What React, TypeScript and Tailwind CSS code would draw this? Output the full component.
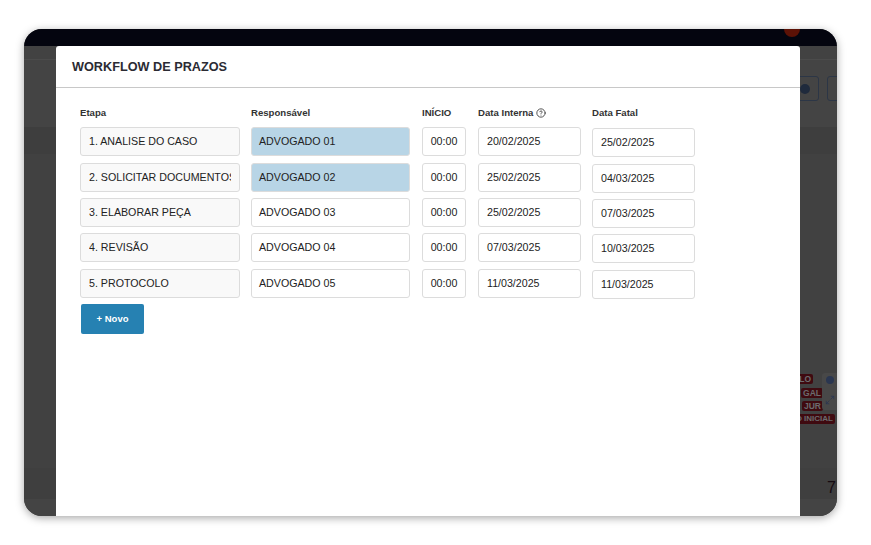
import { CircleHelp, Maximize2 } from 'lucide-react';

const rows = [
    { etapa: '1. ANALISE DO CASO', resp: 'ADVOGADO 01', hi: true, inicio: '00:00', interna: '20/02/2025', fatal: '25/02/2025', gap: 'mb-[7px]' },
    { etapa: '2. SOLICITAR DOCUMENTOS', resp: 'ADVOGADO 02', hi: true, inicio: '00:00', interna: '25/02/2025', fatal: '04/03/2025', gap: 'mb-[6px]' },
    { etapa: '3. ELABORAR PEÇA', resp: 'ADVOGADO 03', hi: false, inicio: '00:00', interna: '25/02/2025', fatal: '07/03/2025', gap: 'mb-[6px]' },
    { etapa: '4. REVISÃO', resp: 'ADVOGADO 04', hi: false, inicio: '00:00', interna: '07/03/2025', fatal: '10/03/2025', gap: 'mb-[7px]' },
    { etapa: '5. PROTOCOLO', resp: 'ADVOGADO 05', hi: false, inicio: '00:00', interna: '11/03/2025', fatal: '11/03/2025', gap: 'mb-[6px]' },
];

const cell = 'flex h-[29px] shrink-0 items-center overflow-hidden whitespace-nowrap rounded-[3px] border border-[#dcdcdc] pb-[2px] text-[10.67px] text-[#222]';
const tag = 'rounded-[2px] bg-[#3f0a10] px-[2px] whitespace-nowrap';

export default function App() {
    return (
        <div className="h-[545px] w-[871px] bg-white pl-[24px] pt-[29px] font-['Liberation_Sans',Arial,sans-serif]">
            {/* tela de fundo com o overlay escuro */}
            <div className="relative flex h-[487px] w-[813px] flex-col overflow-hidden rounded-[18px] bg-[#414141] shadow-[0_2px_8px_rgba(0,0,0,0.35)]">
                <div className="flex h-[17px] shrink-0 justify-end bg-[#04050f] pr-[37px]">
                    <div className="-mt-[8px] h-[16px] w-[16px] rounded-full bg-[#5c1206]" />
                </div>
                <div className="h-[14px] shrink-0 border-b border-[#4b4b4b] bg-[#424242]" />
                <div className="flex h-[67px] shrink-0 items-center justify-end gap-[8px] bg-[#444444] pb-[10px]">
                    <div className="flex h-[25px] w-[27px] items-center justify-center rounded-[3px] border border-[#2c3646]">
                        <div className="ml-[-2px] h-[10px] w-[10px] rounded-full bg-[#1f2a3c]" />
                    </div>
                    <div className="-mr-[12px] h-[25px] w-[22px] rounded-[3px] border border-[#2c3646]" />
                </div>
                <div className="h-[27px] shrink-0 bg-[#3e3e3e]" />

                {/* etiquetas que aparecem ao lado do modal */}
                <div className="relative flex flex-1 flex-col items-end gap-[2px] pt-[220px] text-[8.5px] leading-[10px] font-bold text-[#6b6b6e]">
                    <span className={`${tag} mr-[24px]`}>LO</span>
                    <span className={`${tag} mr-[14px] mt-[2px]`}>GAL</span>
                    <span className={`${tag} mr-[14px] mt-[1px]`}>JUR</span>
                    <span className={`${tag} mr-[2px] mt-[1px] text-[8px]`}>O INICIAL</span>
                    <div className="absolute right-0 top-[219px] flex h-[37px] w-[15px] flex-col items-center justify-between rounded-l-[3px] bg-[#484848] py-[3px]">
                        <div className="h-[8px] w-[8px] rounded-full bg-[#2a3650]" />
                        <Maximize2 className="mb-[2px] h-[10px] w-[10px] text-[#2a3650]" />
                    </div>
                </div>
                <div className="flex h-[31px] shrink-0 items-start justify-end bg-[#3f3f3f] pr-[1px] pt-[11px] text-[16px] leading-[18px] text-[#150a10]">7</div>
                <div className="h-[17px] shrink-0 bg-[#444444]" />

                {/* modal por cima da tela */}
                <div className="absolute bottom-0 left-[32px] top-[17px] w-[744px] rounded-t-[3px] bg-white">
                    <div className="flex h-[42px] items-center border-b border-[#c8c8c8] pl-[16px] pt-[2px] text-[12.7px] font-bold text-[#2b2b33]">
                        WORKFLOW DE PRAZOS
                    </div>
                    <div className="pl-[24px]">
                        <div className="flex h-[39px] items-center pt-[12px] text-[9.6px] font-bold text-[#333]">
                            <div className="mr-[11px] w-[160px]">Etapa</div>
                            <div className="mr-[11px] w-[160px]">Responsável</div>
                            <div className="mr-[12px] w-[44px]">INÍCIO</div>
                            <div className="mr-[11px] flex w-[103px] items-center gap-[3px]">
                                Data Interna
                                <CircleHelp className="h-[10px] w-[10px]" />
                            </div>
                            <div className="w-[103px]">Data Fatal</div>
                        </div>
                        {rows.map((r) => (
                            <div key={r.etapa} className={`flex h-[29px] ${r.gap}`}>
                                <div className={`${cell} mr-[11px] w-[160px] bg-[#f9f9f9] px-[8px]`}>
                                    <span className="block w-full overflow-hidden">{r.etapa}</span>
                                </div>
                                <div className={`${cell} mr-[12px] w-[159px] pl-[7px] ${r.hi ? 'bg-[#b8d5e6]' : 'bg-white'}`}>{r.resp}</div>
                                <div className={`${cell} mr-[12px] w-[44px] justify-center bg-white`}>{r.inicio}</div>
                                <div className={`${cell} mr-[11px] w-[103px] bg-white pl-[8px]`}>{r.interna}</div>
                                <div className={`${cell} mt-[1px] w-[103px] bg-white pl-[8px]`}>{r.fatal}</div>
                            </div>
                        ))}
                        <button className="ml-[1px] flex h-[30px] w-[63px] items-center justify-center rounded-[2px] bg-[#2681b2] text-[9.5px] font-bold text-white">
                            + Novo
                        </button>
                    </div>
                </div>
            </div>
        </div>
    );
}
